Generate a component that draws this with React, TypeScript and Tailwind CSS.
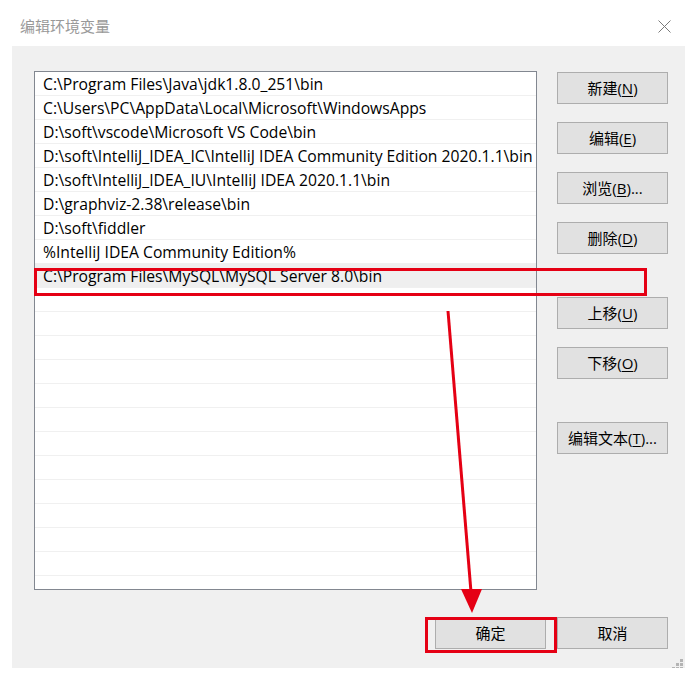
const paths = [
  "C:\\Program Files\\Java\\jdk1.8.0_251\\bin",
  "C:\\Users\\PC\\AppData\\Local\\Microsoft\\WindowsApps",
  "D:\\soft\\vscode\\Microsoft VS Code\\bin",
  "D:\\soft\\IntelliJ_IDEA_IC\\IntelliJ IDEA Community Edition 2020.1.1\\bin",
  "D:\\soft\\IntelliJ_IDEA_IU\\IntelliJ IDEA 2020.1.1\\bin",
  "D:\\graphviz-2.38\\release\\bin",
  "D:\\soft\\fiddler",
  "%IntelliJ IDEA Community Edition%",
  "C:\\Program Files\\MySQL\\MySQL Server 8.0\\bin",
];

const font = "font-['Segoe_UI','Open_Sans','Noto_Sans_CJK_SC',sans-serif]";

function Btn({ label, hot, tail = "" }: { label: string; hot?: string; tail?: string }) {
  return (
    <button className="w-[111px] h-[32px] bg-[#e1e1e1] border border-[#adadad] text-[15px] text-black flex items-center justify-center">
      {label}
      {hot && (
        <>
          (<span className="underline underline-offset-2">{hot}</span>){tail}
        </>
      )}
    </button>
  );
}

export default function App() {
  const rows = [...paths, ...Array(14).fill("")];

  return (
    <div className={`relative w-[698px] h-[680px] bg-white overflow-hidden ${font}`}>
      {/* title bar */}
      <div className="h-[46px] flex items-center justify-between pt-[7px] pl-[20px] pr-[27px]">
        <span className="text-[15px] text-[#999999] font-['Noto_Sans_CJK_SC',sans-serif]">编辑环境变量</span>
        <svg width="13" height="13" viewBox="0 0 13 13">
          <path d="M0.5 0.5 L12.5 12.5 M12.5 0.5 L0.5 12.5" stroke="#7a7a7a" strokeWidth="1" />
        </svg>
      </div>

      {/* dialog body */}
      <div className="ml-[12px] w-[673px] h-[622px] bg-[#f0f0f0] flex flex-col pt-[25px] pl-[22px]">
        <div className="flex gap-[20px]">
          <div className="w-[503px] h-[519px] bg-white border border-[#828790] overflow-hidden">
            {rows.map((p, i) => (
              <div
                key={i}
                className={`h-[24px] border-b border-[#f0f0f0] pl-[8px] text-[15.7px] leading-[25px] text-black whitespace-nowrap ${
                  i === 8 ? "bg-[#efefef]" : ""
                }`}
              >
                {p}
              </div>
            ))}
          </div>

          <div className="flex flex-col pt-[1px]">
            <div className="flex flex-col gap-[18px]">
              <Btn label="新建" hot="N" />
              <Btn label="编辑" hot="E" />
              <Btn label="浏览" hot="B" tail="..." />
              <Btn label="删除" hot="D" />
            </div>
            <div className="flex flex-col gap-[18px] mt-[43px]">
              <Btn label="上移" hot="U" />
              <Btn label="下移" hot="O" />
            </div>
            <div className="mt-[43px]">
              <Btn label="编辑文本" hot="T" tail="..." />
            </div>
          </div>
        </div>

        <div className="flex justify-end gap-[11px] mt-[27px] pr-[17px]">
          <Btn label="确定" />
          <Btn label="取消" />
        </div>
      </div>

      {/* annotations drawn over the screenshot */}
      <svg className="absolute inset-0 pointer-events-none" width="698" height="680">
        <rect x="35.5" y="269.5" width="610" height="25" fill="none" stroke="#e50014" strokeWidth="3" />
        <rect x="426.5" y="618.5" width="129" height="33" fill="none" stroke="#e50014" strokeWidth="3" />
        <line x1="448" y1="311" x2="471" y2="592" stroke="#e50014" strokeWidth="3" />
        <polygon points="461,589 482,589 472,613" fill="#e50014" />
        <g fill="#b4b4b4">
          <rect x="680" y="659" width="3" height="3" />
          <rect x="676" y="663" width="3" height="3" />
          <rect x="680" y="663" width="3" height="3" />
          <rect x="672" y="667" width="3" height="1" />
          <rect x="676" y="667" width="3" height="1" />
          <rect x="680" y="667" width="3" height="1" />
        </g>
      </svg>
    </div>
  );
}
